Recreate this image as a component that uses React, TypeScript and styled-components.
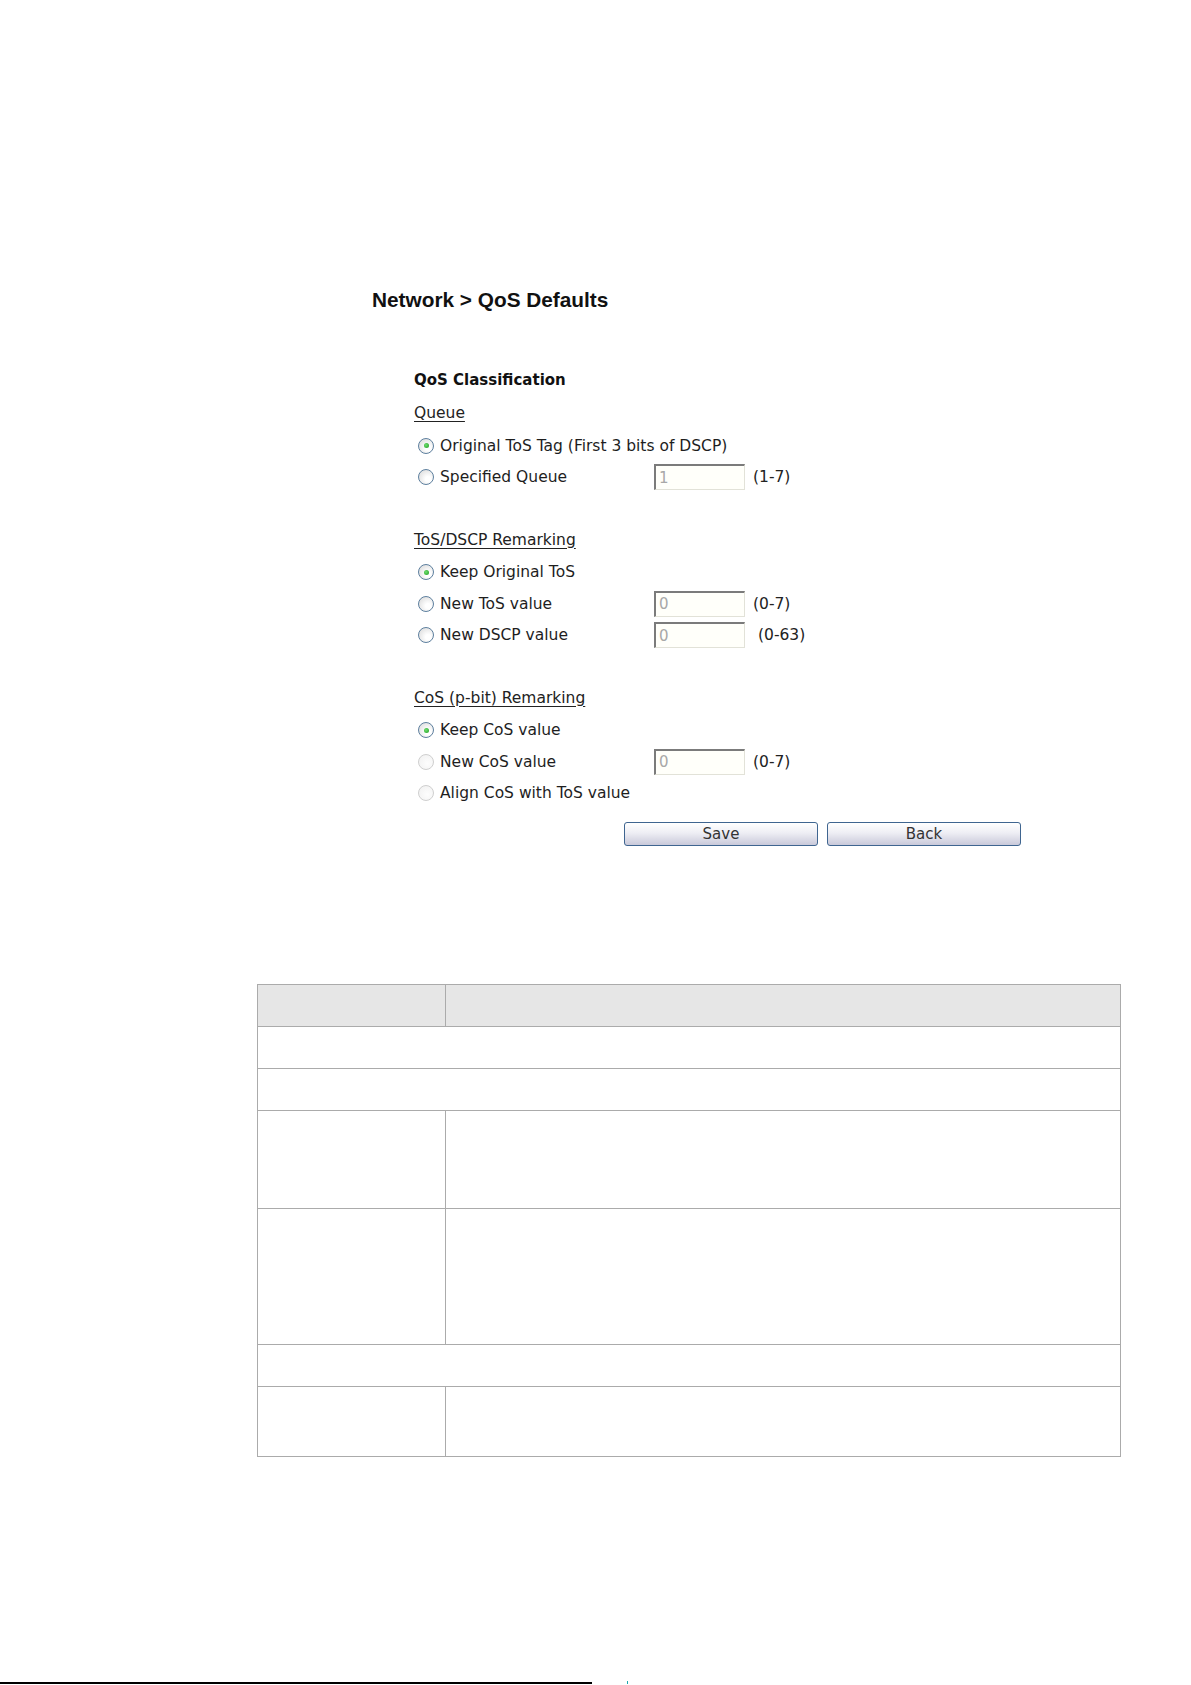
import React from 'react'
import styled, { createGlobalStyle } from 'styled-components'

const GlobalStyle = createGlobalStyle`
  html, body {
    margin: 0;
    padding: 0;
    background: #ffffff;
  }
  body {
    font-family: 'DejaVu Sans', Verdana, sans-serif;
    color: #222;
  }
`

type Option = {
  label: string
  checked?: boolean
  disabled?: boolean
  value?: string
  range?: string
  rangeGap?: number
}

type Section = {
  title: string
  options: Option[]
}

const sections: Section[] = [
  {
    title: 'Queue',
    options: [
      { label: 'Original ToS Tag (First 3 bits of DSCP)', checked: true },
      { label: 'Specified Queue', value: '1', range: '(1-7)' },
    ],
  },
  {
    title: 'ToS/DSCP Remarking',
    options: [
      { label: 'Keep Original ToS', checked: true },
      { label: 'New ToS value', value: '0', range: '(0-7)' },
      { label: 'New DSCP value', value: '0', range: '(0-63)', rangeGap: 13 },
    ],
  },
  {
    title: 'CoS (p-bit) Remarking',
    options: [
      { label: 'Keep CoS value', checked: true },
      { label: 'New CoS value', value: '0', range: '(0-7)', disabled: true },
      { label: 'Align CoS with ToS value', disabled: true },
    ],
  },
]

// row heights of the empty parameter table; full = spans both columns
const tableRows: { height: number; full: boolean }[] = [
  { height: 42, full: true },
  { height: 42, full: true },
  { height: 98, full: false },
  { height: 136, full: false },
  { height: 42, full: true },
  { height: 70, full: false },
]

export default function App() {
  return (
    <Page>
      <GlobalStyle />
      <Title>Network &gt; QoS Defaults</Title>

      <Form>
        <FormHeading>QoS Classification</FormHeading>
        {sections.map((section, i) => (
          <Group key={section.title} first={i === 0}>
            <GroupLabel>{section.title}</GroupLabel>
            {section.options.map((opt) => (
              <OptionRow key={opt.label}>
                <RadioLabel>
                  <Radio checked={!!opt.checked} disabled={!!opt.disabled} />
                  <span>{opt.label}</span>
                </RadioLabel>
                {opt.value !== undefined && (
                  <>
                    <ValueInput readOnly value={opt.value} />
                    <Range gap={opt.rangeGap ?? 8}>{opt.range}</Range>
                  </>
                )}
              </OptionRow>
            ))}
          </Group>
        ))}
        <Buttons>
          <Button type="button">Save</Button>
          <Button type="button">Back</Button>
        </Buttons>
      </Form>

      <ParamTable>
        <tbody>
          <HeaderRow>
            <FirstCell />
            <Cell />
          </HeaderRow>
          {tableRows.map((row, i) => (
            <BodyRow key={i} h={row.height}>
              {row.full ? (
                <Cell colSpan={2} />
              ) : (
                <>
                  <FirstCell />
                  <Cell />
                </>
              )}
            </BodyRow>
          ))}
        </tbody>
      </ParamTable>

      <Footer>
        <FooterRule />
        <FooterTick />
      </Footer>
    </Page>
  )
}

const Page = styled.div`
  width: 1191px;
  height: 1685px;
  padding-top: 288px;
  box-sizing: border-box;
  position: relative;
  overflow: hidden;
`

const Title = styled.h1`
  margin: 0 0 0 372px;
  font-family: 'Liberation Sans', Arial, sans-serif;
  font-weight: bold;
  font-size: 20.8px;
  line-height: 24px;
  color: #111;
`

const Form = styled.div`
  margin: 52px 0 0 414px;
  font-size: 15.5px;
`

const FormHeading = styled.div`
  font-weight: bold;
  font-size: 15px;
  line-height: 32px;
  color: #111;
`

const Group = styled.div<{ first: boolean }>`
  margin-top: ${(p) => (p.first ? 0 : 29.5)}px;
`

const GroupLabel = styled.div`
  line-height: 34px;
  text-decoration: underline;
  text-underline-offset: 3px;
  color: #222;
`

const OptionRow = styled.div`
  display: flex;
  align-items: center;
  height: 31.5px;
`

const RadioLabel = styled.label`
  display: flex;
  align-items: center;
  width: 240px;
  padding-left: 4px;
  box-sizing: border-box;
  color: #1e1e1e;
  white-space: nowrap;
`

const Radio = styled.span<{ checked: boolean; disabled: boolean }>`
  position: relative;
  flex: none;
  width: 14px;
  height: 14px;
  margin-right: 6px;
  border-radius: 50%;
  border: 1px solid ${(p) => (p.disabled ? '#cfcfcf' : '#5d7f9e')};
  background: ${(p) =>
    p.disabled
      ? 'radial-gradient(circle at 60% 60%, #fdfdfd, #f0f0f0)'
      : 'radial-gradient(circle at 65% 65%, #ffffff 20%, #d6d6d6 100%)'};
  &::after {
    content: '';
    display: ${(p) => (p.checked ? 'block' : 'none')};
    position: absolute;
    left: 4.5px;
    top: 4.5px;
    width: 5px;
    height: 5px;
    border-radius: 50%;
    background: radial-gradient(circle at 40% 40%, #6fe06f, #1f9a1f);
  }
`

const ValueInput = styled.input`
  width: 91px;
  height: 26px;
  box-sizing: border-box;
  margin: 0;
  padding: 0 3px;
  border-style: solid;
  border-width: 2px 1px 1px 2px;
  border-color: #7b7b7b #e2e2d8 #e2e2d8 #7b7b7b;
  background: #fffffa;
  font-family: 'DejaVu Sans', Verdana, sans-serif;
  font-size: 15px;
  color: #a8a8a8;
  outline: none;
`

const Range = styled.span<{ gap: number }>`
  margin-left: ${(p) => p.gap}px;
  color: #222;
`

const Buttons = styled.div`
  display: flex;
  gap: 9px;
  margin: 13px 0 0 210px;
`

const Button = styled.button`
  width: 194px;
  height: 24px;
  padding: 0;
  border: 1px solid #3f6590;
  border-radius: 3px;
  background: linear-gradient(#ffffff 0%, #eeeef4 45%, #c9c9da 100%);
  font-family: 'DejaVu Sans', Verdana, sans-serif;
  font-size: 15px;
  line-height: 20px;
  color: #333;
`

const ParamTable = styled.table`
  margin: 138px 0 0 257px;
  width: 864px;
  border-collapse: collapse;
  table-layout: fixed;
`

const Cell = styled.td`
  border: 1px solid #ababab;
  padding: 0;
`

const FirstCell = styled(Cell)`
  width: 187px;
`

const HeaderRow = styled.tr`
  height: 42px;
  background: #e6e6e6;
`

const BodyRow = styled.tr<{ h: number }>`
  height: ${(p) => p.h}px;
`

const Footer = styled.div`
  position: absolute;
  left: 0;
  bottom: 1px;
  width: 100%;
  height: 3px;
  display: flex;
  align-items: flex-end;
`

const FooterRule = styled.div`
  width: 592px;
  height: 2px;
  background: #000;
`

const FooterTick = styled.div`
  width: 1px;
  height: 3px;
  margin-left: 35px;
  background: #1aa8b0;
`
